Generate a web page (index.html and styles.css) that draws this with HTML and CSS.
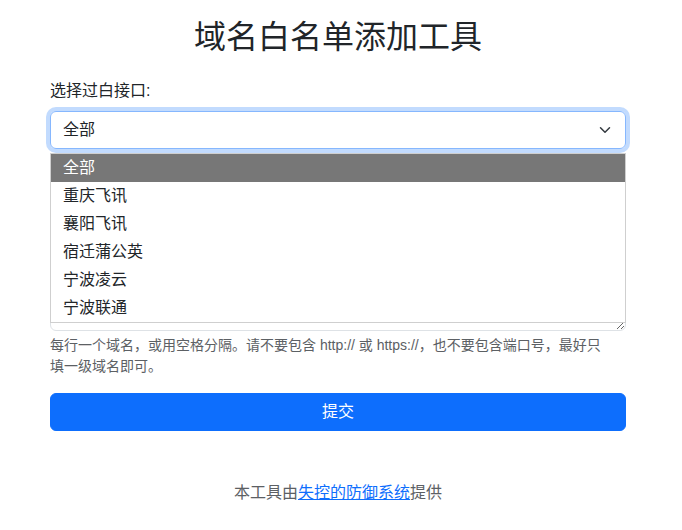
FILE: index.html
```html
<!DOCTYPE html>
<html lang="zh-CN">
<head>
<meta charset="utf-8">
<title>域名白名单添加工具</title>
<link rel="stylesheet" href="styles.css">
</head>
<body>
<div class="page">
  <main class="container">
    <h1 class="title">域名白名单添加工具</h1>
    <form class="form">
      <div class="field">
        <label class="form-label">选择过白接口:</label>
        <div class="select-wrap">
          <div class="select">
            <span>全部</span>
            <svg class="chevron" width="16" height="12" viewBox="0 0 16 16"><path d="m2 5 6 6 6-6" fill="none" stroke="#343a40" stroke-width="2" stroke-linecap="round" stroke-linejoin="round"/></svg>
          </div>
          <ul class="listbox">
            <li class="option selected">全部</li>
            <li class="option">重庆飞讯</li>
            <li class="option">襄阳飞讯</li>
            <li class="option">宿迁蒲公英</li>
            <li class="option">宁波凌云</li>
            <li class="option">宁波联通</li>
          </ul>
        </div>
      </div>
      <div class="field">
        <textarea class="textarea"></textarea>
        <div class="form-text">每行一个域名，或用空格分隔。请不要包含 http:// 或 https://，也不要包含端口号，最好只<br>填一级域名即可。</div>
      </div>
      <button type="button" class="btn">提交</button>
    </form>
    <footer class="footer">本工具由<a href="#">失控的防御系统</a>提供</footer>
  </main>
</div>
</body>
</html>
```
FILE: styles.css
```css
* { box-sizing: border-box; }
html, body { margin: 0; background: #fff; }
body {
  font-family: "Liberation Sans", "Noto Sans CJK SC", sans-serif;
  font-size: 16px;
  line-height: 1.5;
  color: #212529;
}
.page { width: 676px; }
.container {
  max-width: 600px;
  margin: 0 auto;
  padding: 18px 12px 0;
}
.title {
  margin: 0 0 23px;
  font-size: 32px;
  font-weight: 400;
  line-height: 1.2;
  text-align: center;
}
.form { display: flex; flex-direction: column; }
.field { margin-bottom: 16px; }
.form-label { display: block; margin-bottom: 8px; }
.select-wrap { position: relative; }
.select {
  height: 38px;
  border: 1px solid #86b7fe;
  border-radius: 6px;
  box-shadow: 0 0 0 4px rgba(13, 110, 253, 0.25);
  padding: 0 12px;
  display: flex;
  align-items: center;
  justify-content: space-between;
}
.chevron { display: block; }
.listbox {
  position: absolute;
  left: 0;
  right: 0;
  top: 42px;
  margin: 0;
  padding: 0;
  list-style: none;
  background: #fff;
  border: 1px solid #cfcfcf;
  z-index: 2;
}
.option {
  height: 28px;
  line-height: 28px;
  padding: 0 12px;
  color: #212529;
}
.option.selected { background: #777777; color: #fff; }
.textarea {
  display: block;
  width: 100%;
  height: 166px;
  border: 1px solid #dee2e6;
  border-radius: 6px;
  padding: 6px 12px;
  font: inherit;
  resize: vertical;
}
.form-text {
  margin-top: 4px;
  font-size: 14px;
  line-height: 21px;
  color: #5c6064;
}
.btn {
  height: 38px;
  border: 1px solid #0d6efd;
  background: #0d6efd;
  color: #fff;
  border-radius: 6px;
  font: inherit;
  padding: 0;
}
.footer {
  margin-top: 50px;
  text-align: center;
  color: #5c6064;
}
.footer a { color: #0d6efd; text-decoration: underline; }
```
